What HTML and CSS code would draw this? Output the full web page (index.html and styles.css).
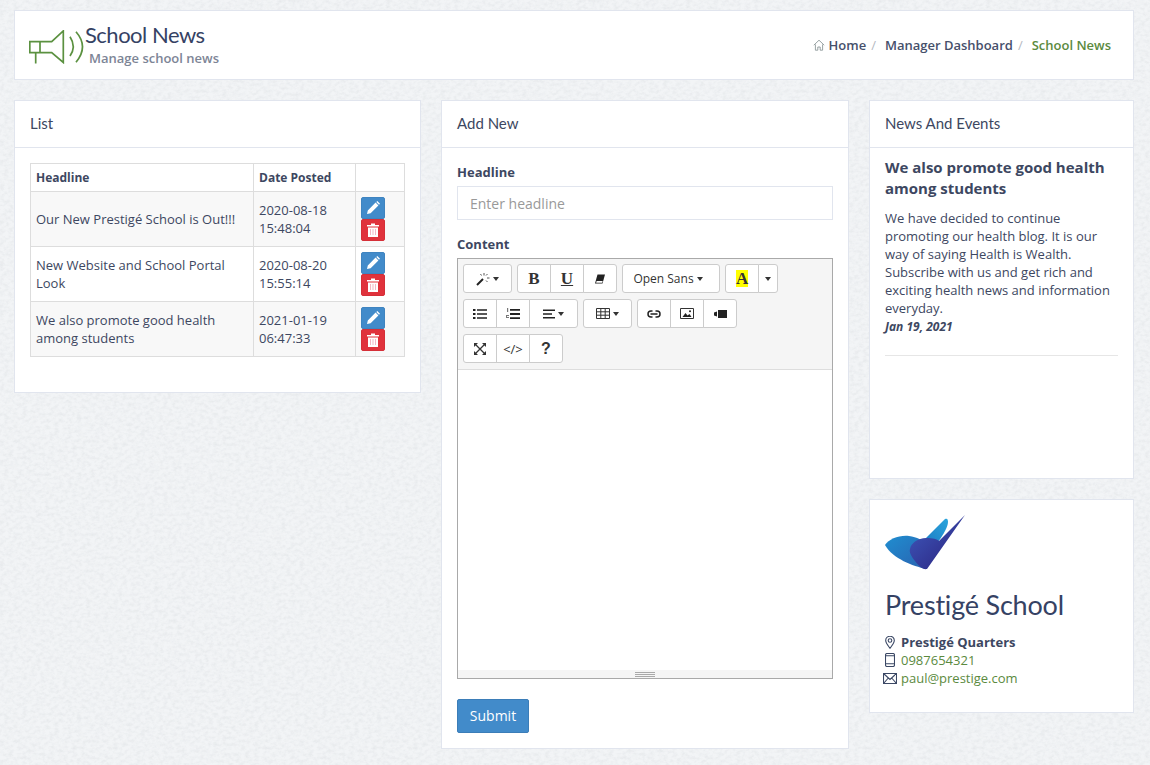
FILE: index.html
```html
<!DOCTYPE html>
<html lang="en">
<head>
<meta charset="utf-8">
<title>School News</title>
<link rel="stylesheet" href="styles.css">
</head>
<body>
<header class="page-head">
  <div class="head-left">
    <svg class="mega" viewBox="0 0 56 34" width="56" height="34" fill="none" stroke="#5b9140" stroke-width="1.700">
      <path d="M.8 11.700H22.700L34.300 .9V32.500L22.700 22.700H.8zM11 11.700V22.700M6.700 22.700V33.500"/>
      <path d="M41 6.700Q47.500 16.700 41 26"/>
      <path d="M47 1.700Q60 16.700 47 32.300"/>
    </svg>
    <div class="head-titles">
      <h1>School News</h1>
      <p>Manage school news</p>
    </div>
  </div>
  <nav class="crumbs">
    <svg class="home" viewBox="0 0 12 12" width="12" height="12" fill="none" stroke="#7f8c8d" stroke-width="0.8"><path d="M.8 6.200 6 1.200l5.200 5M2.400 5.400v5.800h2.400V8h2.400v3.200h2.400V5.400"/></svg>
    <a>Home</a><span class="sep">/</span><a>Manager Dashboard</a><span class="sep">/</span><span class="current">School News</span>
  </nav>
</header>

<main class="columns">
  <section class="panel list-panel">
    <h2 class="panel-title">List</h2>
    <div class="panel-body">
      <table class="news">
        <thead><tr><th class="c1">Headline</th><th class="c2">Date Posted</th><th class="c3"></th></tr></thead>
        <tbody>
          <tr>
            <td>Our New Prestigé School is Out!!!</td><td>2020-08-18 15:48:04</td>
            <td class="acts">
              <a class="act edit"><svg viewBox="0 0 14 14" width="14" height="14"><path fill="#fff" d="M1 13l.8-3.600L9.600 1.600l2.800 2.800-7.800 7.800zM10.300 1l1-1 2.700 2.700-1 1z"/></svg></a>
              <a class="act del"><svg viewBox="0 0 14 14" width="14" height="14"><path fill="#fff" d="M1 2h4V.5h4V2h4v1.500H1zM2 4.500h10V14H2z"/><path fill="#f4b8c4" d="M4 6h1v6H4zM6.500 6h1v6h-1zM9 6h1v6H9z"/></svg></a>
            </td>
          </tr>
          <tr>
            <td>New Website and School Portal Look</td><td>2020-08-20 15:55:14</td>
            <td class="acts">
              <a class="act edit"><svg viewBox="0 0 14 14" width="14" height="14"><path fill="#fff" d="M1 13l.8-3.600L9.600 1.600l2.800 2.800-7.800 7.800zM10.300 1l1-1 2.700 2.700-1 1z"/></svg></a>
              <a class="act del"><svg viewBox="0 0 14 14" width="14" height="14"><path fill="#fff" d="M1 2h4V.5h4V2h4v1.500H1zM2 4.500h10V14H2z"/><path fill="#f4b8c4" d="M4 6h1v6H4zM6.500 6h1v6h-1zM9 6h1v6H9z"/></svg></a>
            </td>
          </tr>
          <tr>
            <td>We also promote good health among students</td><td>2021-01-19 06:47:33</td>
            <td class="acts">
              <a class="act edit"><svg viewBox="0 0 14 14" width="14" height="14"><path fill="#fff" d="M1 13l.8-3.600L9.600 1.600l2.800 2.800-7.800 7.800zM10.300 1l1-1 2.700 2.700-1 1z"/></svg></a>
              <a class="act del"><svg viewBox="0 0 14 14" width="14" height="14"><path fill="#fff" d="M1 2h4V.5h4V2h4v1.500H1zM2 4.500h10V14H2z"/><path fill="#f4b8c4" d="M4 6h1v6H4zM6.500 6h1v6h-1zM9 6h1v6H9z"/></svg></a>
            </td>
          </tr>
        </tbody>
      </table>
    </div>
  </section>

  <section class="panel add-panel">
    <h2 class="panel-title">Add New</h2>
    <form class="panel-body add-form">
      <label class="field-label">Headline</label>
      <input class="text-input" type="text" placeholder="Enter headline">
      <label class="field-label content-label">Content</label>
      <div class="editor">
        <div class="toolbar">
          <div class="tool-row">
            <div class="group">
              <button type="button" class="tb w48"><svg viewBox="0 0 14 14" width="14" height="14"><path fill="none" stroke="#222" stroke-width="2" d="M1 13 7 7"/><path stroke="#555" fill="none" stroke-width="1" d="M8 1v2.500M11 6h2.500M4.500 2l1 1.500M11.500 2 10 3.500M11.500 10 10 8.500"/></svg><i class="caret"></i></button>
            </div>
            <div class="group">
              <button type="button" class="tb glyph serif">B</button>
              <button type="button" class="tb glyph serif under">U</button>
              <button type="button" class="tb"><svg viewBox="0 0 12 12" width="12" height="12"><path fill="#222" d="M3.500 1.500H11L8.500 10.500H1z"/><path fill="#fff" d="M2.600 8h6.100l-.6 1.700H2.100z"/></svg></button>
            </div>
            <div class="group">
              <button type="button" class="tb font">Open Sans <i class="caret"></i></button>
            </div>
            <div class="group">
              <button type="button" class="tb glyph serif"><span class="hl">A</span></button>
              <button type="button" class="tb w20"><i class="caret"></i></button>
            </div>
          </div>
          <div class="tool-row">
            <div class="group">
              <button type="button" class="tb"><svg viewBox="0 0 14 10" width="14" height="10"><path fill="#222" d="M0 0h2.500v2H0zM4 .2h10v1.600H4zM0 4h2.500v2H0zM4 4.200h10v1.600H4zM0 8h2.500v2H0zM4 8.200h10v1.600H4z"/></svg></button>
              <button type="button" class="tb"><svg viewBox="0 0 14 12" width="14" height="12"><path fill="#222" d="M4 1h10v1.800H4zM4 5.100h10v1.800H4zM4 9.200h10V11H4z"/><path fill="#777" d="M1 0h1.200v4H1zM0 7h3v1H1v1h2v1H0z"/></svg></button>
              <button type="button" class="tb w48"><svg viewBox="0 0 12 10" width="12" height="10"><path fill="#222" d="M0 .4h12V2H0zM0 4.200h9v1.600H0zM0 8h12v1.600H0z"/></svg><i class="caret"></i></button>
            </div>
            <div class="group">
              <button type="button" class="tb w48"><svg viewBox="0 0 14 11" width="14" height="11" fill="none" stroke="#333"><path d="M.5.500h13v10H.5zM.5 3.800h13M.5 7.200h13M4.800.5v10M9.200.5v10"/></svg><i class="caret"></i></button>
            </div>
            <div class="group">
              <button type="button" class="tb"><svg viewBox="0 0 14 8" width="14" height="8" fill="none" stroke="#222" stroke-width="1.500"><path d="M5.500 1H4a3 3 0 0 0 0 6h1.500M8.500 1H10a3 3 0 0 1 0 6H8.500M3.500 4h7"/></svg></button>
              <button type="button" class="tb"><svg viewBox="0 0 14 11" width="14" height="11" fill="none" stroke="#333"><path d="M.5.500h13v10H.5z"/><path fill="#222" stroke="none" d="M2.500 9l3-4 2 2.500 2-1.500 2 3z"/><circle cx="10" cy="3.300" r="1" fill="#222" stroke="none"/></svg></button>
              <button type="button" class="tb"><svg viewBox="0 0 14 8" width="14" height="8"><path fill="#222" d="M5 0h9v8H5zM1 2.500 4 1.500v5L1 5.500z"/></svg></button>
            </div>
          </div>
          <div class="tool-row">
            <div class="group">
              <button type="button" class="tb"><svg viewBox="0 0 12 12" width="12" height="12" fill="#333"><path d="M0 0h4L0 4zM12 0v4L8 0zM0 12V8l4 4zM12 12H8l4-4z"/><path stroke="#333" stroke-width="1.300" d="M1.500 1.500l9 9M10.500 1.500l-9 9"/></svg></button>
              <button type="button" class="tb code">&lt;/&gt;</button>
              <button type="button" class="tb glyph help">?</button>
            </div>
          </div>
        </div>
        <div class="edit-area"></div>
        <div class="resizer"><span></span></div>
      </div>
      <button type="button" class="submit">Submit</button>
    </form>
  </section>

  <aside class="side">
    <section class="panel events-panel">
      <h2 class="panel-title">News And Events</h2>
      <article class="event">
        <h3>We also promote good health among students</h3>
        <p>We have decided to continue promoting our health blog. It is our way of saying Health is Wealth. Subscribe with us and get rich and exciting health news and information everyday.</p>
        <time>Jan 19, 2021</time>
      </article>
      <hr class="rule">
    </section>
    <section class="panel school-panel">
      <svg class="logo" viewBox="0 0 81 56" width="81" height="56">
        <defs>
          <linearGradient id="lg1" x1="0" y1="0" x2="1" y2="1"><stop offset="0" stop-color="#1f8ed0"/><stop offset="1" stop-color="#2a62b0"/></linearGradient>
          <linearGradient id="lg2" x1="0" y1="0" x2="1" y2="1"><stop offset="0" stop-color="#3f5cc0"/><stop offset="1" stop-color="#2a1f7a"/></linearGradient>
          <linearGradient id="lg3" x1="0" y1="1" x2="1" y2="0"><stop offset="0" stop-color="#1c7fc6"/><stop offset="1" stop-color="#2ba5dc"/></linearGradient>
        </defs>
        <path fill="url(#lg3)" d="M41 24 60 5c2-1 3 0 3 3 0 4-4 12-10 20z"/>
        <path fill="url(#lg1)" d="M0 31c4-6 14-10 24-9 8 1 14 4 17 9v24C28 52 8 45 0 31z"/>
        <path fill="url(#lg2)" d="M80 1 42 55c-4 1-8-3-12-8-4-5-6-9-5-12 1-6 8-11 16-11 7 0 11 1 13 3z"/>
      </svg>
      <h2 class="school-name">Prestigé School</h2>
      <ul class="contact">
        <li><svg viewBox="0 0 10 13" width="10" height="13" fill="none" stroke="#3a4764" stroke-width="1.100"><path d="M5 12.300C3 9.500 .7 7 .7 4.500a4.300 4.300 0 0 1 8.600 0C9.300 7 7 9.500 5 12.300z"/><circle cx="5" cy="4.500" r="1.800"/></svg><strong>Prestigé Quarters</strong></li>
        <li><svg viewBox="0 0 10 14" width="10" height="14" fill="none" stroke="#3a4764" stroke-width="1.100"><rect x=".5" y=".5" width="9" height="13" rx="1.500"/><path d="M.5 2.800h9M.5 10.800h9"/></svg><a>0987654321</a></li>
        <li><svg class="mail" viewBox="0 0 14 11" width="14" height="11" fill="none" stroke="#3a4764" stroke-width="1.100"><path d="M.5.500h13v10H.5zM.5.500 7 6.500l6.500-6M.5 10.500 5.300 5M13.500 10.500 8.700 5"/></svg><a>paul@prestige.com</a></li>
      </ul>
    </section>
  </aside>
</main>
</body>
</html>
```
FILE: styles.css
```css
* { box-sizing: border-box; }
html, body { margin: 0; height: 765px; overflow: hidden; }
body {
  padding: 10px 16px 0 14px;
  font-family: "Open Sans", "Liberation Sans", sans-serif;
  font-size: 13px;
  line-height: 18px;
  color: #3d4761;
  background-color: #f2f4f6;
  background-image: url("data:image/svg+xml,%3Csvg xmlns='http://www.w3.org/2000/svg' width='300' height='300'%3E%3Cfilter id='n' x='0' y='0' width='100%25' height='100%25'%3E%3CfeTurbulence type='fractalNoise' baseFrequency='.22 .3' numOctaves='3' stitchTiles='stitch'/%3E%3CfeColorMatrix values='0 0 0 0 .5 0 0 0 0 .53 0 0 0 0 .56 .4 0 0 0 -.15'/%3E%3C/filter%3E%3Crect width='300' height='300' filter='url(%23n)'/%3E%3C/svg%3E");
}

.page-head {
  height: 70px;
  display: flex;
  align-items: center;
  justify-content: space-between;
  padding: 0 22px 0 14px;
  background: #fff;
  border: 1px solid #e1e5ee;
}
.head-left { display: flex; align-items: flex-start; }
.mega { margin-top: 7px; }
.head-titles { margin-top: -1px; }
.head-titles h1 {
  margin: 0;
  font-family: "Lato", sans-serif;
  font-size: 22px;
  line-height: 26px;
  font-weight: 400;
  letter-spacing: -.5px;
  color: #354264;
}
.head-titles p {
  margin: 1px 0 0 4px;
  font-size: 13px;
  line-height: 18px;
  font-weight: 600;
  color: #7d8596;
}
.crumbs { display: flex; align-items: center; font-weight: 600; font-size: 13px; }
.home { margin-right: 4px; }
.crumbs a { color: #46506b; }
.sep { color: #b5b9c2; font-weight: 400; margin: 0 9px 0 5px; }
.current { color: #5b8a3e; }

.columns {
  margin-top: 20px;
  display: grid;
  grid-template-columns: 407px 408px 265px;
  column-gap: 20px;
  align-items: start;
}
.panel { background: #fff; border: 1px solid #e1e5ee; }
.panel-title {
  margin: 0;
  height: 47px;
  padding: 0 15px 2px;
  display: flex;
  align-items: center;
  font-family: "Lato", sans-serif;
  font-size: 15px;
  font-weight: 400;
  color: #3d4761;
  border-bottom: 1px solid #e1e5ee;
}
.panel-body { padding: 15px; }

.list-panel { height: 293px; }
.news { width: 374px; border-collapse: collapse; table-layout: fixed; }
.news th, .news td { border: 1px solid #ddd; padding: 5px; text-align: left; vertical-align: middle; }
.news th { height: 28px; padding: 4px 5px; font-size: 12px; font-weight: 700; }
.news td { height: 55px; }
.news tbody tr:nth-child(odd) { background: #f8f8f8; }
.c1 { width: 223px; }
.c2 { width: 102px; }
.c3 { width: 49px; }
.news .acts { padding: 5px; line-height: 0; }
.act { display: flex; width: 24px; height: 22px; align-items: center; justify-content: center; border-radius: 2px; }
.edit { background: #428bca; border: 1px solid #3f84c0; }
.del { background: #e0323c; border: 1px solid #d52f38; }

.add-panel { height: 649px; }
.field-label { display: block; font-weight: 700; font-size: 13px; line-height: 18px; margin-bottom: 5px; }
.text-input {
  display: block; width: 376px; height: 34px; padding: 0 12px;
  font: 14px "Open Sans", sans-serif; color: #555;
  border: 1px solid #e1e5ee; border-radius: 0; outline: 0;
}
.text-input::placeholder { color: #999; opacity: 1; }
.content-label { margin-top: 15px; }
.editor { width: 376px; height: 421px; display: flex; flex-direction: column; border: 1px solid #a9a9a9; }
.toolbar { height: 111px; padding: 5px 5px 0; background: #f5f5f5; border-bottom: 1px solid #ddd; flex: none; }
.tool-row { display: flex; gap: 5px; margin-bottom: 6px; }
.group { display: flex; }
.tb {
  display: flex; align-items: center; justify-content: center; gap: 3px;
  width: 34px; height: 29px; padding: 0; margin-left: -1px;
  background: #fff; border: 1px solid #ccc; color: #333; font: 12px "Open Sans", sans-serif;
}
.group .tb:first-child { margin-left: 0; border-radius: 3px 0 0 3px; }
.group .tb:last-child { border-radius: 0 3px 3px 0; }
.group .tb:only-child { border-radius: 3px; }
.group .tb.w48 { width: 49px; }
.group .tb.w20 { width: 20px; }
.group .tb.font { width: 98px; padding-right: 6px; }
.caret { display: inline-block; width: 0; height: 0; border: 3px solid transparent; border-top: 4px solid #333; border-bottom: 0; }
.glyph { font-size: 17px; font-weight: 700; }
.serif { font-family: "Liberation Serif", serif; }
.under { text-decoration: underline; }
.hl { display: block; width: 12px; background: #ff0; line-height: 17px; font-size: 17px; }
.code { font-size: 13px; }
.help { font-family: "Liberation Sans", sans-serif; font-size: 16px; }
.edit-area { flex: 1; background: #fff; }
.resizer { height: 8px; flex: none; background: #f5f5f5; display: flex; align-items: center; justify-content: center; }
.resizer span { width: 20px; height: 5px; border-top: 1px solid #a9a9a9; border-bottom: 1px solid #a9a9a9; background: linear-gradient(#a9a9a9,#a9a9a9) center / 100% 1px no-repeat; }
.submit {
  display: block; margin-top: 20px; width: 72px; height: 34px; padding: 0 0 2px;
  font: 14px "Open Sans", sans-serif; color: #fff;
  background: #428bca; border: 1px solid #3b7db8; border-radius: 2px;
}

.side { display: flex; flex-direction: column; gap: 20px; }
.events-panel { height: 379px; }
.event { padding: 9px 15px 0; }
.event h3 { margin: 0; font-size: 15px; line-height: 21px; font-weight: 700; color: #3d4761; }
.event p { margin: 10px 0 0; }
.event time { display: block; margin-top: 1px; font-size: 12px; font-weight: 700; font-style: italic; }
.rule { margin: 19px 15px 0; border: 0; border-top: 1px solid #e6e6e6; }

.school-panel { height: 214px; padding: 14px 15px 0; }
.logo { display: block; }
.school-name {
  margin: 17px 0 0;
  font-family: "Lato", sans-serif;
  font-size: 27px;
  line-height: 36px;
  font-weight: 400;
  font-variant-ligatures: none;
  letter-spacing: -.2px;
  color: #354264;
}
.contact { list-style: none; margin: 10px 0 0; padding: 0; }
.contact li { display: flex; align-items: center; gap: 6px; }
.contact a { color: #5b8a3e; }
.contact svg { flex: none; }
.mail { margin-left: -2px; margin-right: -2px; }
```
